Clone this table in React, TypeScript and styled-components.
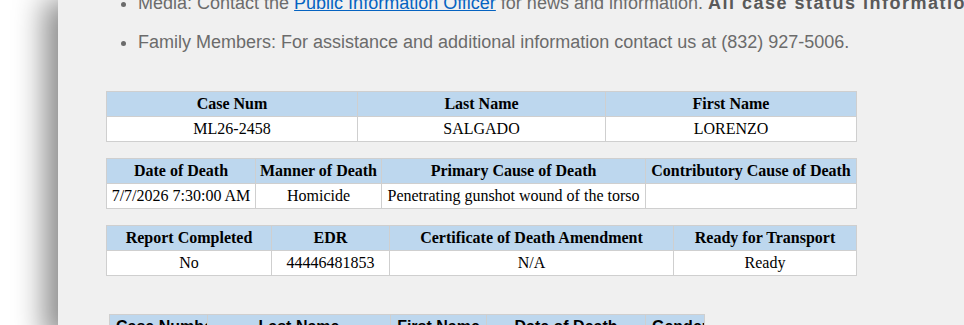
import styled, { createGlobalStyle } from 'styled-components';

const GlobalStyles = createGlobalStyle`
  html, body {
    margin: 0;
    padding: 0;
    background: #ffffff;
    overflow: hidden;
  }
`;

const Page = styled.div`
  height: 325px;
  overflow: hidden;
  padding-left: 58px;
`;

const Panel = styled.div`
  background-color: #f0f0f0;
  min-height: 325px;
  box-shadow: -14px 0 28px rgba(0, 0, 0, 0.45);
  padding-left: 48px;
  display: flow-root;
`;

const InfoList = styled.ul`
  margin: -10px 0 0 0;
  padding: 0 0 0 32px;
  font-family: 'Liberation Sans', Arial, sans-serif;
  font-size: 18px;
  line-height: 27px;
  color: #6b6b6b;
  white-space: nowrap;
`;

const InfoItem = styled.li`
  margin-bottom: 12px;
`;

const Link = styled.a`
  color: #0563c1;
  text-decoration: underline;
`;

const Strong = styled.b`
  color: #595959;
  letter-spacing: 1.5px;
`;

const Tables = styled.div`
  display: flex;
  flex-direction: column;
  gap: 16px;
  margin-top: 35px;
  width: 750px;
`;

const Table = styled.table<{ $font?: 'serif' | 'sans'; $width: number }>`
  border-collapse: collapse;
  width: ${(p) => p.$width}px;
  table-layout: fixed;
  font-family: ${(p) =>
    p.$font === 'sans'
      ? "'Liberation Sans', Arial, sans-serif"
      : "'Liberation Serif', 'Times New Roman', serif"};
  font-size: 16px;
  color: #000;

  th {
    padding: ${(p) => (p.$font === 'sans' ? '3px 6px' : '3px 2px')};
  }
`;

const Th = styled.th`
  background-color: #bdd7ee;
  border: 1px solid #cfcfcf;
  font-weight: bold;
  text-align: center;
  white-space: nowrap;
  overflow: hidden;
  height: 18px;
`;

const Td = styled.td`
  background-color: #ffffff;
  border: 1px solid #cfcfcf;
  padding: 3px 2px;
  text-align: center;
  white-space: nowrap;
  height: 17px;
`;

const Lower = styled.div`
  margin-top: 38px;
  margin-left: 3px;
`;

type Grid = { widths: number[]; head: string[]; row?: string[] };

const grids: Grid[] = [
  {
    widths: [251, 248, 251],
    head: ['Case Num', 'Last Name', 'First Name'],
    row: ['ML26-2458', 'SALGADO', 'LORENZO'],
  },
  {
    widths: [149, 126, 264, 211],
    head: ['Date of Death', 'Manner of Death', 'Primary Cause of Death', 'Contributory Cause of Death'],
    row: ['7/7/2026 7:30:00 AM', 'Homicide', 'Penetrating gunshot wound of the torso', ''],
  },
  {
    widths: [165, 118, 284, 183],
    head: ['Report Completed', 'EDR', 'Certificate of Death Amendment', 'Ready for Transport'],
    row: ['No', '44446481853', 'N/A', 'Ready'],
  },
];

const lower: Grid = {
  widths: [98, 183, 96, 159, 59],
  head: ['Case Number', 'Last Name', 'First Name', 'Date of Death', 'Gender'],
};

function DataTable({ grid, font }: { grid: Grid; font?: 'serif' | 'sans' }) {
  const total = grid.widths.reduce((a, b) => a + b, 0);
  return (
    <Table $width={total} $font={font}>
      <colgroup>
        {grid.widths.map((w, i) => (
          <col key={i} style={{ width: w }} />
        ))}
      </colgroup>
      <thead>
        <tr>
          {grid.head.map((h) => (
            <Th key={h}>{h}</Th>
          ))}
        </tr>
      </thead>
      {grid.row && (
        <tbody>
          <tr>
            {grid.row.map((c, i) => (
              <Td key={i}>{c}</Td>
            ))}
          </tr>
        </tbody>
      )}
    </Table>
  );
}

export default function App() {
  return (
    <>
      <GlobalStyles />
      <Page>
        <Panel>
          <InfoList>
            <InfoItem>
              Media: Contact the <Link href="#">Public Information Officer</Link> for news and
              information. <Strong>All case status information is updated daily.</Strong>
            </InfoItem>
            <InfoItem>
              Family Members: For assistance and additional information contact us at (832) 927-5006.
            </InfoItem>
          </InfoList>
          <Tables>
            {grids.map((g, i) => (
              <DataTable key={i} grid={g} />
            ))}
          </Tables>
          <Lower>
            <DataTable grid={lower} font="sans" />
          </Lower>
        </Panel>
      </Page>
    </>
  );
}
